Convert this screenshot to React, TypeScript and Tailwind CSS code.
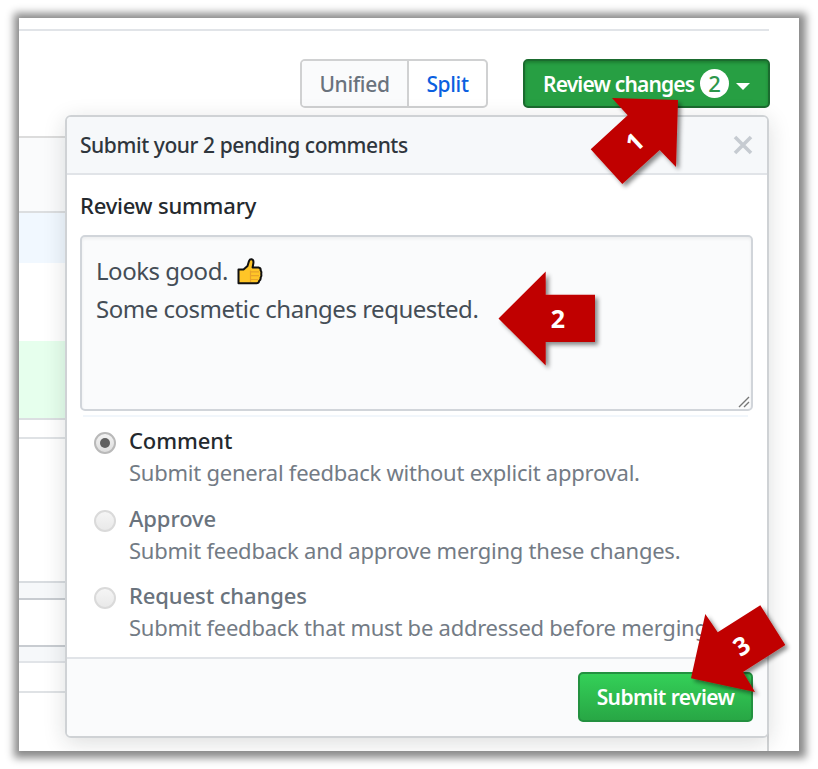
import type { ReactNode } from "react";

function BackdropRows() {
  return (
    <div className="flex w-[750px] flex-col border-r-2 border-[#d3d5d7]">
      <div className="h-[2px] bg-[#dcdcdc]" />
      <div className="h-[73px] bg-[#fafbfc]" />
      <div className="h-[2px] bg-[#dcdee0]" />
      <div className="h-[50px] bg-[#f1f8ff]" />
      <div className="h-[78px]" />
      <div className="h-[77px] bg-[#e6ffed]" />
      <div className="h-[2px] bg-[#dcdfe2]" />
      <div className="h-[17px]" />
      <div className="h-[2px] bg-[#dfe2e5]" />
      <div className="h-[142px]" />
      <div className="h-[2px] bg-[#d8dce0]" />
      <div className="h-[15px] bg-[#f6f8fa]" />
      <div className="h-[2px] bg-[#c8ccd1]" />
      <div className="h-[45px]" />
      <div className="h-[2px] bg-[#c8ccd1]" />
      <div className="h-[14px] bg-[#f6f8fa]" />
      <div className="h-[2px] bg-[#e1e4e8]" />
      <div className="h-[28px]" />
      <div className="h-[2px] bg-[#dfe2e5]" />
      <div className="h-[60px]" />
    </div>
  );
}

function ThumbsUp() {
  return (
    <svg width="26" height="27" viewBox="0 0 26 27" className="mt-[2px] ml-[9px] inline-block">
      <path
        d="M1.5 11.5H6.5L10.5 8L12 3Q12.8 1 14.6 1.3Q16.8 1.8 16.4 5L15.6 9.5H21.5Q24 10 23.6 12.4Q24.8 13.8 24.2 16Q24.8 18 23.6 19.7Q24 21.7 22.2 22.9Q21.8 25.3 19.5 25.3H1.5Z"
        fill="#ffc527"
        stroke="#111"
        strokeWidth="2"
        strokeLinejoin="round"
      />
      <path d="M13.5 13.8H22M14 17.7H22M14 21.5H21M13.5 12.5V24" fill="none" stroke="#e8a32a" strokeWidth="1.2" />
    </svg>
  );
}

function Radio({ checked }: { checked?: boolean }) {
  return checked ? (
    <span className="mt-[15px] flex size-[22px] shrink-0 items-center justify-center rounded-full border-2 border-[#b9b9b9] bg-linear-to-b from-[#f2f2f2] to-[#dedede]">
      <span className="size-[10px] rounded-full bg-[#606060]" />
    </span>
  ) : (
    <span className="mt-[15px] size-[22px] shrink-0 rounded-full border-2 border-[#dadada] bg-linear-to-b from-[#f5f5f5] to-[#e9e9e9]" />
  );
}

function Option({ checked, title, children }: { checked?: boolean; title: string; children: ReactNode }) {
  return (
    <label className="flex h-[77.5px] gap-[13px] pl-[28px]">
      <Radio checked={checked} />
      <span className="flex flex-col whitespace-nowrap pt-[7px]">
        <span className={checked ? "text-[22px] leading-[32px] font-medium tracking-[-0.1px] text-[#24292e]" : "text-[22px] leading-[32px] font-medium tracking-[-0.1px] text-[#6a737d]"}>
          {title}
        </span>
        <span className="text-[22px] leading-[32px] tracking-[-0.24px] text-[#737b85]">{children}</span>
      </span>
    </label>
  );
}

function Callouts() {
  return (
    <svg width="818" height="769" viewBox="0 0 818 769" className="pointer-events-none absolute top-0 left-0">
      <defs>
        <filter id="arrowShadow" x="-20%" y="-20%" width="150%" height="150%">
          <feDropShadow dx="3" dy="3" stdDeviation="2" floodColor="#000" floodOpacity="0.45" />
        </filter>
      </defs>
      <g fill="#c00000" filter="url(#arrowShadow)">
        <path d="M678 100L612 98L627.7 115.3L590.7 149.3L622.3 184L659.7 150L676 167Z" />
        <path d="M498.5 318.5L545.7 271.5V294.8H595V342H545.7V365.5Z" />
        <path d="M691 678.3L705.3 614L717.7 632.3L760.3 605.3L785.3 645L743 672L755 692Z" />
      </g>
      <g fill="#fff" fontSize="25" fontWeight="700" textAnchor="middle">
        <text x="0" y="9" transform="translate(634.5 142) rotate(-43)">1</text>
        <text x="558" y="328">2</text>
        <text x="0" y="9" transform="translate(741.5 645.7) rotate(-33)">3</text>
      </g>
    </svg>
  );
}

export default function App() {
  return (
    <div className="relative h-[769px] w-[818px] overflow-hidden bg-white pt-[18px] pl-[19px] font-['Noto_Sans','Open_Sans',sans-serif]">
      <div className="relative h-[733px] w-[780px] overflow-hidden bg-white shadow-[1px_1px_8px_6px_rgba(0,0,0,0.46)]">
        <div className="pt-[11px]">
          <div className="h-[2px] w-[750px] bg-[#e1e4e8]" />
        </div>
        <div className="flex h-[77px] w-[751px] justify-end pt-[28px]">
          <div className="mr-[35px] flex h-[49px] w-[188px] overflow-hidden rounded-[5px] border-2 border-[#d0d1d2] text-[21px] leading-[47px] font-medium tracking-[-0.35px]">
            <div className="w-[107px] border-r-2 border-[#d0d1d2] bg-[#fafbfc] text-center text-[#6a737d]">Unified</div>
            <div className="flex-1 text-center text-[#0b5fe0]">Split</div>
          </div>
          <button className="flex h-[49px] w-[247px] items-center rounded-[5px] border-2 border-[#1b6b2f] bg-[#279f43] pl-[18px] text-[21px] font-semibold tracking-[-0.83px] whitespace-nowrap text-white shadow-[inset_0_2px_3px_rgba(0,40,0,0.25)]">
            <span className="w-[151px] pt-[2px]">Review changes</span>
            <span className="ml-[6px] flex size-[29px] items-center justify-center rounded-full bg-white text-[22px] font-medium tracking-normal text-[#2c974b]">2</span>
            <span className="mt-[5px] ml-[7px] border-x-[7px] border-t-[7px] border-x-transparent border-t-white" />
          </button>
        </div>
        <div className="h-[28px]" />
        <BackdropRows />

        <div className="absolute top-[97px] left-[46px] flex h-[623px] w-[704px] flex-col overflow-hidden rounded-[6px] border-2 border-[#cfd2d5] bg-white shadow-[0_5px_22px_rgba(27,31,35,0.15)]">
          <div className="flex h-[58px] shrink-0 items-center justify-between border-b-2 border-[#e1e4e8] bg-[#f6f8fa] pr-[14px] pl-[13px]">
            <span className="pt-[2px] text-[21px] font-medium tracking-[-0.43px] text-[#2f363d]">Submit your 2 pending comments</span>
            <svg width="20" height="20" viewBox="0 0 20 20" stroke="#c6cbd1" strokeWidth="3.6">
              <path d="M2 2L18 18M18 2L2 18" />
            </svg>
          </div>
          <div className="h-[482px] shrink-0 px-[13px] pt-[14px]">
            <div className="text-[22px] leading-[32px] font-medium tracking-[-0.2px] text-[#24292e]">Review summary</div>
            <div className="relative mt-[14px] h-[176px] w-[673px] rounded-[5px] border-2 border-[#d1d5da] bg-[#fafbfc] pt-[14px] pl-[14px] text-[24px] leading-[39px] tracking-[-0.48px] text-[#444d56] shadow-[inset_0_2px_3px_rgba(27,31,35,0.06)]">
              <div className="flex h-[38px] items-center">
                Looks good.
                <ThumbsUp />
              </div>
              <div>Some cosmetic changes requested.</div>
              <svg width="12" height="12" className="absolute right-[1px] bottom-[1px]" stroke="#777" strokeWidth="1.4">
                <path d="M1 11L11 1M6 11L11 6" />
              </svg>
            </div>
            <div className="mt-[4px] ml-[3px] h-[2px] w-[665px] bg-[#f1f6fb]" />
            <div className="-ml-[14px]">
              <Option checked title="Comment">Submit general feedback without explicit approval.</Option>
              <Option title="Approve">Submit feedback and approve merging these changes.</Option>
              <Option title="Request changes">Submit feedback that must be addressed before merging.</Option>
            </div>
          </div>
          <div className="flex flex-1 justify-end border-t-2 border-[#e1e4e8] bg-[#fafbfc] pt-[13px] pr-[14px]">
            <button className="h-[50px] w-[175px] rounded-[5px] border-2 border-[#239140] bg-linear-to-b from-[#34d058] to-[#28a745] pt-[1px] text-[21px] leading-[45px] font-semibold tracking-[-0.6px] whitespace-nowrap text-white">
              Submit review
            </button>
          </div>
        </div>
      </div>
      <Callouts />
    </div>
  );
}
